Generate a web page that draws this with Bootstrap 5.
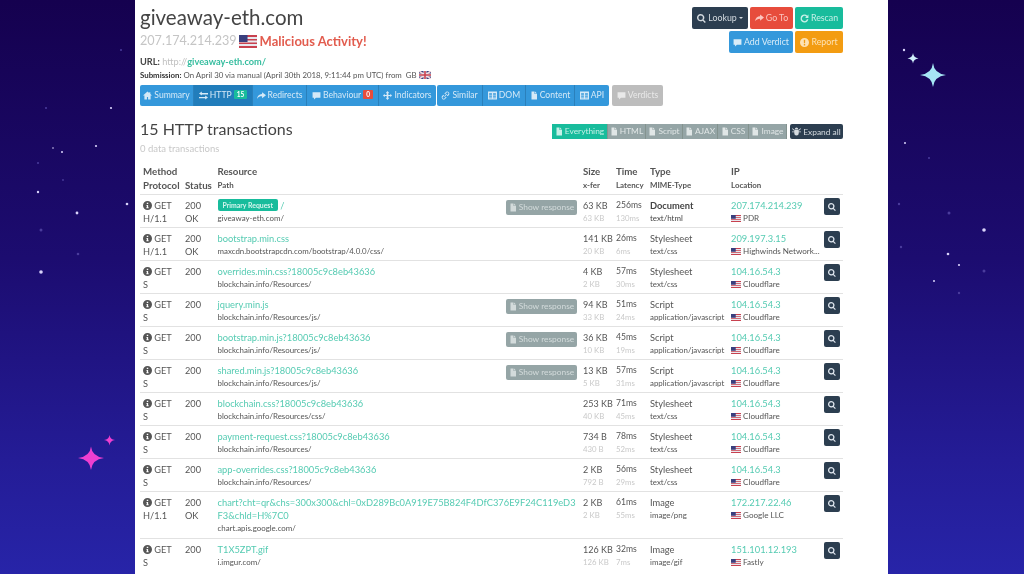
<!DOCTYPE html>
<html lang="en">
<head>
<meta charset="utf-8">
<title>giveaway-eth.com</title>
<link href="https://cdn.jsdelivr.net/npm/bootstrap@5.3.0/dist/css/bootstrap.min.css" rel="stylesheet">
<style>
html,body{height:574px;overflow:hidden}
body{background:linear-gradient(180deg,#15014f 0%,#1c0c70 45%,#241c96 80%,#2724a8 100%);font-family:"Lato",sans-serif;color:#555;position:relative}
.sky{position:absolute;left:0;top:0;width:1024px;height:574px}
.panel{position:relative;width:753px;height:574px;margin-left:135px;background:#fff;padding:0 45px 0 5px;overflow:hidden;filter:blur(.6px)}
.top-right{width:160px;gap:2px;padding-top:7px}
.act-row{gap:2px}
.site-name{font-size:20.5px;line-height:26px;font-weight:400;color:#444;margin:4px 0 0}
.ip-line{font-size:12.6px;line-height:18px;margin-top:2px;color:#c5c5c5;display:flex;align-items:center;gap:2px}
.alarm{color:#e25c4e;font-weight:700;font-size:13px;margin-left:1px}
.url-line{font-size:9.2px;line-height:13px;margin-top:5px;color:#c0c0c0}
.url-line b{color:#444}
.url-line a,.url-line strong{color:#35bd9f;font-weight:700;text-decoration:none}
.sub-line{font-size:7.85px;line-height:13px;margin-top:1px;color:#555}
.sub-line b{color:#333}
.act{font-size:8.8px;line-height:12px;padding:0;height:22px;border:0;border-radius:2px;color:#fff;display:inline-flex;align-items:center;justify-content:center;gap:2px}
.act:hover{color:#fff}
.w-look{width:56px}.w-go{width:43px}.w-re{width:48px}.w-add{width:64px}
.c-dark{background:#2c3e50;color:#d5dbe0}.c-red{background:#e74c3c;color:#fbc5bf}.c-green{background:#18bc9c;color:#c6f0e7}.c-blue{background:#3498db;color:#d9ecf8}.c-orange{background:#f39c12;color:#fde2b4}
.tabs{height:21px;margin-top:3px;gap:1px;display:flex}
.panel .tabs .btn-group>.tab+.tab,.panel .fbar .btn-group>.fbtn+.fbtn{margin-left:0}
.tab{font-size:8.6px;padding:0;height:21px;border:0;border-right:1px solid #2a80bb;background:#3498db;color:#d5e9f7;display:inline-flex;align-items:center;justify-content:center;gap:2px;border-radius:0}
.tab:hover{background:#3498db;color:#d5e9f7}
.tab.on{background:#217dbb}
.tab.on:hover{background:#217dbb}
.btn-group>.tab:first-child{border-radius:2px 0 0 2px}
.btn-group>.tab:last-child{border-radius:0 2px 2px 0;border-right:0}
.t54{width:54px}.t59{width:59px}.t72{width:72px}.t57{width:57px}.t46{width:46px}.t43{width:43px}.t49{width:49px}.t34{width:34px}
.tab-off{width:51px;margin-left:2px;background:#bdbdbd;border:0;border-radius:2px;color:#e9e9e9;font-size:8.6px;padding:0;display:inline-flex;align-items:center;justify-content:center;gap:2px}
.pill{font-size:6.5px;line-height:9px;padding:0 3px;border-radius:1px;font-weight:700;color:#fff}
.pill-g{background:#18bc9c}.pill-r{background:#e74c3c}
.head2{margin-top:12px;height:37px}
.sec-title{font-size:16px;line-height:22px;font-weight:400;color:#444;margin:0}
.sec-sub{font-size:9.5px;line-height:12px;margin-top:3px;color:#c8c8c8}
.fbar{gap:3px;margin-top:6px}
.fbtn{font-size:8.4px;height:15px;padding:0;border:0;border-right:1px solid #84938f;background:#95a5a6;color:#e0e6e6;border-radius:0;display:inline-flex;align-items:center;justify-content:center;gap:2px}
.fbtn:hover{background:#95a5a6;color:#e0e6e6}
.fbtn.on{background:#18bc9c;color:#c6f0e7}
.fbtn.on:hover{background:#18bc9c;color:#c6f0e7}
.f56{width:56px}.f38{width:38px}.f37{width:37px}.f35{width:35px}.f31{width:31px}
.expand{width:53px;height:15px;font-size:8.4px}
.tx{table-layout:fixed;width:703px;margin:9px 0 0;--bs-table-color:#555;--bs-table-bg:transparent;border-color:#e2e2e2}
.tx td,.tx th{padding:4px 0 2px 3px;line-height:13px;border-bottom:0;border-top:1px solid #e2e2e2;vertical-align:top;font-size:9.2px;color:#555;font-weight:400;white-space:nowrap}
.tx thead th{border-top:0;padding:0 0 2px 3px;color:#555;font-size:9.7px;font-weight:700;line-height:14px;vertical-align:bottom}
.tx td:nth-child(4){font-size:9px}
.tx td:nth-child(5){font-size:8.6px}
.tx td:nth-child(6){font-size:9.3px}
.tx td:nth-child(6).strong-t{font-size:9.3px;font-weight:700;color:#444}
.tx td:nth-child(7) .sm{font-size:8.1px}
.cm{width:42px}.cs{width:32.5px}.cr{width:365.5px}.cz{width:33px}.ct{width:34px}.cy{width:81px}.ci{width:93px}.cb{width:22px}
.lnk{color:#55cbb2;text-decoration:none;font-size:9.3px}
.tx td.wrapcell{white-space:normal;word-break:break-all;padding-bottom:3px;padding-right:3px}
.sm{font-size:7.9px;display:block}
.dim{color:#c9c9c9;font-size:7.8px;display:block}
.low{display:block}
.tag{display:inline-block;background:#18bc9c;color:#d6f5ee;font-size:6.9px;font-weight:700;line-height:12px;padding:0 5px;border-radius:2px;vertical-align:top}
.showr{float:right;width:71px;height:15px;margin:1px 3px 0 0;padding:0;background:#95a5a6;border:0;border-radius:2px;color:#d3dbdb;font-size:8.4px;display:inline-flex;align-items:center;justify-content:center;gap:2px}
.zoombtn{width:16px;height:17px;padding:0;background:#2c3e50;border:0;border-radius:2px;color:#dfe6ee;display:flex;align-items:center;justify-content:center;margin-top:-1px}
.zoombtn .i{width:8px;height:8px}
.i{width:9px;height:9px;fill:currentColor;flex:none}
.i-f{width:8px;height:9px;fill:currentColor;flex:none}
.ico-in{width:9px;height:9px;fill:#555;vertical-align:-1px}
.flag-b{width:18px;height:13px}
.flag-s{width:10px;height:7px;vertical-align:-.5px}
.flag-g{width:12px;height:8px;vertical-align:-1px}
.svg-defs{position:absolute;width:0;height:0}
</style>
</head>
<body>
<svg class="svg-defs" aria-hidden="true">
<defs>
<symbol id="file" viewBox="0 0 16 16"><path d="M3 0h6v5h5v11H3zM10 0l4 4h-4z"/></symbol>
<symbol id="home" viewBox="0 0 16 16"><path d="M8 1 0 8h2.500v7H7v-4.500h2V15h4.500V8H16l-3-2.600V2h-2v1.700z"/></symbol>
<symbol id="swap" viewBox="0 0 16 16"><path d="M0 10.500h11V8l5 3.500L11 15v-2H0zM16 3.500H5V1L0 4.500 5 8V6h11z"/></symbol>
<symbol id="share" viewBox="0 0 16 16"><path d="M9 2l7 5.500L9 13V9.500C5 9.500 2.500 10.500 0 14c.5-5 3.500-8 9-8.500z"/></symbol>
<symbol id="chat" viewBox="0 0 16 16"><path d="M1 2h14v10H7l-3.500 3v-3H1z"/></symbol>
<symbol id="cross" viewBox="0 0 16 16"><path d="M8 0l3 3.500H9.500V7H13V5l3 3-3 3V9H9.500v3.500H11L8 16l-3-3.500h1.500V9H3v2L0 8l3-3v2h3.500V3.500H5z"/></symbol>
<symbol id="link" viewBox="0 0 16 16"><path d="M10 1a4 4 0 0 1 4.500 5.500l-2.500 3-1.500-1.300 2.500-2.800a2 2 0 0 0-3-2.600L7.500 5.600 6 4.300zM6 15a4 4 0 0 1-4.500-5.500l2.500-3 1.500 1.300L3 10.600a2 2 0 0 0 3 2.600l2.500-2.800L10 11.700zM5.500 9.800l4.300-5 1 .9-4.300 5z"/></symbol>
<symbol id="grid" viewBox="0 0 16 16"><path d="M0 1h16v14H0zm2 3v2.500h5V4zm7 0v2.500h5V4zM2 8v2h5V8zm7 0v2h5V8zm-7 3.500V13h5v-1.500zm7 0V13h5v-1.500z" fill-rule="evenodd"/></symbol>
<symbol id="mag" viewBox="0 0 16 16"><path d="M6.500 0a6.500 6.500 0 0 1 5.200 10.400l4 4-1.700 1.600-4-4A6.500 6.500 0 1 1 6.500 0zm0 2.500a4 4 0 1 0 0 8 4 4 0 0 0 0-8z" fill-rule="evenodd"/></symbol>
<symbol id="plane" viewBox="0 0 16 16"><path d="M16 6 9 1v3C4 4 1 7 0 13c2-3 5-4.500 9-4.500V12z"/></symbol>
<symbol id="redo" viewBox="0 0 16 16"><path d="M8 1a7 7 0 0 1 5 2l2-2v6H9l2.300-2.300A4.500 4.500 0 1 0 12.400 9.500h2.500A7 7 0 1 1 8 1z"/></symbol>
<symbol id="info" viewBox="0 0 16 16"><path d="M8 0a8 8 0 1 1 0 16A8 8 0 0 1 8 0zM6.700 3v2.500h2.600V3zM6 7v1.500h.8V11H6v1.800h4V11h-.9V7z" fill-rule="evenodd"/></symbol>
<symbol id="bang" viewBox="0 0 16 16"><path d="M8 0a8 8 0 1 1 0 16A8 8 0 0 1 8 0zM6.700 3l.3 6.500h2L9.300 3zM6.800 10.800v2.400h2.400v-2.400z" fill-rule="evenodd"/></symbol>
<symbol id="bug" viewBox="0 0 16 16"><path d="M8 1a3 3 0 0 1 3 3H5a3 3 0 0 1 3-3zM4 5h8v6a4 4 0 0 1-8 0zM0 3l1-1 3 3-1 1zM16 3l-1-1-3 3 1 1zM0 8h4v1.500H0zM12 8h4v1.500h-4z"/></symbol>
<symbol id="us" viewBox="0 0 19 13" preserveAspectRatio="none"><rect width="19" height="13" fill="#e8e8ee"/><path d="M0 0h19v2H0zM0 4h19v1.500H0zM0 7.500h19V9H0zM0 11h19v2H0z" fill="#c8414f"/><rect width="9" height="7" fill="#3a3f7e"/></symbol>
<symbol id="gb" viewBox="0 0 12 8" preserveAspectRatio="none"><rect width="12" height="8" fill="#3a3f7e"/><path d="M0 0l12 8M12 0 0 8" stroke="#f2d8dc" stroke-width="1.600"/><path d="M6 0v8M0 4h12" stroke="#f2e8ea" stroke-width="3"/><path d="M6 0v8M0 4h12" stroke="#c8414f" stroke-width="1.600"/></symbol>
</defs>
</svg>

<svg class="sky" viewBox="0 0 1024 574" aria-hidden="true">
<g fill="#d9d3fa">
<circle cx="111" cy="108" r="1.100"/><circle cx="96" cy="146" r="1.100"/><circle cx="53" cy="148" r=".8"/><circle cx="62" cy="152" r="1"/><circle cx="38" cy="192" r="1.200"/><circle cx="77" cy="213" r="1.400"/><circle cx="127" cy="204" r="1.300"/><circle cx="41" cy="272" r="1.800"/>
<circle cx="904" cy="50" r="1.200"/><circle cx="905" cy="143" r="1"/><circle cx="984" cy="230" r="1.800"/><circle cx="948" cy="254" r="1.300"/><circle cx="959" cy="265" r="1.100"/><circle cx="934" cy="281" r="1"/>
</g>
<g fill="#4a3c9c">
<circle cx="46" cy="108" r="1"/><circle cx="38" cy="163" r="1"/><circle cx="41" cy="230" r="1.500"/><circle cx="78" cy="254" r="1.300"/><circle cx="63" cy="180" r=".9"/><circle cx="121" cy="50" r="1"/>
<circle cx="929" cy="158" r="1"/><circle cx="899" cy="204" r="1.200"/><circle cx="949" cy="213" r="1.500"/><circle cx="901" cy="247" r="1.200"/><circle cx="984" cy="271" r="1.500"/><circle cx="959" cy="293" r="1.200"/>
</g>
<path d="M91 446.500q1 10 13 11.500q-12 1.500-13 12q-1-10.500-13-12q12-1.500 13-11.500z" fill="#ee3fd0"/>
<path d="M109.500 435q.5 4.500 5.500 5q-5 .5-5.500 5.500q-.5-5-5.500-5.500q5-.5 5.500-5z" fill="#ee3fd0"/>
<path d="M933 63q1 10.500 13 12q-12 1.500-13 12q-1-10.500-13-12q12-1.500 13-12z" fill="#a6e6f5"/>
<path d="M913 53q.5 4.500 5.500 5.500q-5 .5-5.500 5q-.5-4.500-5.500-5q5-1 5.500-5.500z" fill="#cfeefa"/>
</svg>

<main class="panel">
<div class="d-flex justify-content-between">
  <div>
    <h1 class="site-name">giveaway-eth.com</h1>
    <div class="ip-line">207.174.214.239 <svg class="flag-b"><use href="#us"/></svg><span class="alarm">Malicious Activity!</span></div>
    <div class="url-line"><b>URL:</b> http://<strong>giveaway-eth.com/</strong></div>
    <div class="sub-line"><b>Submission:</b> On April 30 via manual (April 30th 2018, 9:11:44 pm UTC) from &nbsp;GB <svg class="flag-g"><use href="#gb"/></svg></div>
  </div>
  <div class="top-right d-flex flex-column align-items-end">
    <div class="d-flex act-row">
      <button class="btn act w-look c-dark"><svg class="i"><use href="#mag"/></svg>Lookup <span class="dropdown-toggle"></span></button>
      <button class="btn act w-go c-red"><svg class="i"><use href="#plane"/></svg>Go To</button>
      <button class="btn act w-re c-green"><svg class="i"><use href="#redo"/></svg>Rescan</button>
    </div>
    <div class="d-flex act-row">
      <button class="btn act w-add c-blue"><svg class="i"><use href="#chat"/></svg>Add Verdict</button>
      <button class="btn act w-re c-orange"><svg class="i"><use href="#bang"/></svg>Report</button>
    </div>
  </div>
</div>

<nav class="tabs">
  <div class="btn-group">
    <button class="btn tab t54"><svg class="i"><use href="#home"/></svg>Summary</button>
    <button class="btn tab t59 on"><svg class="i"><use href="#swap"/></svg>HTTP <span class="badge pill pill-g">15</span></button>
    <button class="btn tab t54"><svg class="i"><use href="#share"/></svg>Redirects</button>
    <button class="btn tab t72"><svg class="i"><use href="#chat"/></svg>Behaviour <span class="badge pill pill-r">0</span></button>
    <button class="btn tab t57"><svg class="i"><use href="#cross"/></svg>Indicators</button>
  </div>
  <div class="btn-group">
    <button class="btn tab t46"><svg class="i"><use href="#link"/></svg>Similar</button>
    <button class="btn tab t43"><svg class="i"><use href="#grid"/></svg>DOM</button>
    <button class="btn tab t49"><svg class="i-f"><use href="#file"/></svg>Content</button>
    <button class="btn tab t34"><svg class="i"><use href="#grid"/></svg>API</button>
  </div>
  <button class="btn tab-off"><svg class="i"><use href="#chat"/></svg>Verdicts</button>
</nav>

<div class="d-flex justify-content-between head2">
  <div>
    <h2 class="sec-title">15 HTTP transactions</h2>
    <div class="sec-sub">0 data transactions</div>
  </div>
  <div class="d-flex align-items-start fbar">
    <div class="btn-group">
      <button class="btn fbtn f56 on"><svg class="i-f"><use href="#file"/></svg>Everything</button>
      <button class="btn fbtn f38"><svg class="i-f"><use href="#file"/></svg>HTML</button>
      <button class="btn fbtn f37"><svg class="i-f"><use href="#file"/></svg>Script</button>
      <button class="btn fbtn f35"><svg class="i-f"><use href="#file"/></svg>AJAX</button>
      <button class="btn fbtn f31"><svg class="i-f"><use href="#file"/></svg>CSS</button>
      <button class="btn fbtn f38"><svg class="i-f"><use href="#file"/></svg>Image</button>
    </div>
    <button class="btn act expand c-dark"><svg class="i"><use href="#bug"/></svg>Expand all</button>
  </div>
</div>

<table class="table tx">
<colgroup><col class="cm"><col class="cs"><col class="cr"><col class="cz"><col class="ct"><col class="cy"><col class="ci"><col class="cb"></colgroup>
<thead>
<tr><th>Method<br>Protocol</th><th><br>Status</th><th>Resource<span class="sm">Path</span></th><th>Size<span class="sm">x-fer</span></th><th>Time<span class="sm">Latency</span></th><th>Type<span class="sm">MIME-Type</span></th><th>IP<span class="sm">Location</span></th><th></th></tr>
</thead>
<tbody>
<tr><td><svg class="ico-in"><use href="#info"/></svg> GET<span class="low">H/1.1</span></td><td>200<span class="low">OK</span></td><td><button class="btn showr"><svg class="i-f"><use href="#file"/></svg>Show response</button><span class="tag">Primary Request</span> <a class="lnk" href="#">/</a><span class="sm">giveaway-eth.com/</span></td><td>63 KB<span class="dim">63 KB</span></td><td>256ms<span class="dim">130ms</span></td><td class="strong-t">Document<span class="sm fw-normal">text/html</span></td><td><a class="lnk" href="#">207.174.214.239</a><span class="sm"><svg class="flag-s"><use href="#us"/></svg> PDR</span></td><td><button class="btn zoombtn"><svg class="i"><use href="#mag"/></svg></button></td></tr>
<tr><td><svg class="ico-in"><use href="#info"/></svg> GET<span class="low">H/1.1</span></td><td>200<span class="low">OK</span></td><td><a class="lnk" href="#">bootstrap.min.css</a><span class="sm">maxcdn.bootstrapcdn.com/bootstrap/4.0.0/css/</span></td><td>141 KB<span class="dim">20 KB</span></td><td>26ms<span class="dim">6ms</span></td><td>Stylesheet<span class="sm">text/css</span></td><td><a class="lnk" href="#">209.197.3.15</a><span class="sm"><svg class="flag-s"><use href="#us"/></svg> Highwinds Network...</span></td><td><button class="btn zoombtn"><svg class="i"><use href="#mag"/></svg></button></td></tr>
<tr><td><svg class="ico-in"><use href="#info"/></svg> GET<span class="low">S</span></td><td>200</td><td><a class="lnk" href="#">overrides.min.css?18005c9c8eb43636</a><span class="sm">blockchain.info/Resources/</span></td><td>4 KB<span class="dim">2 KB</span></td><td>57ms<span class="dim">30ms</span></td><td>Stylesheet<span class="sm">text/css</span></td><td><a class="lnk" href="#">104.16.54.3</a><span class="sm"><svg class="flag-s"><use href="#us"/></svg> Cloudflare</span></td><td><button class="btn zoombtn"><svg class="i"><use href="#mag"/></svg></button></td></tr>
<tr><td><svg class="ico-in"><use href="#info"/></svg> GET<span class="low">S</span></td><td>200</td><td><button class="btn showr"><svg class="i-f"><use href="#file"/></svg>Show response</button><a class="lnk" href="#">jquery.min.js</a><span class="sm">blockchain.info/Resources/js/</span></td><td>94 KB<span class="dim">33 KB</span></td><td>51ms<span class="dim">24ms</span></td><td>Script<span class="sm">application/javascript</span></td><td><a class="lnk" href="#">104.16.54.3</a><span class="sm"><svg class="flag-s"><use href="#us"/></svg> Cloudflare</span></td><td><button class="btn zoombtn"><svg class="i"><use href="#mag"/></svg></button></td></tr>
<tr><td><svg class="ico-in"><use href="#info"/></svg> GET<span class="low">S</span></td><td>200</td><td><button class="btn showr"><svg class="i-f"><use href="#file"/></svg>Show response</button><a class="lnk" href="#">bootstrap.min.js?18005c9c8eb43636</a><span class="sm">blockchain.info/Resources/js/</span></td><td>36 KB<span class="dim">10 KB</span></td><td>45ms<span class="dim">19ms</span></td><td>Script<span class="sm">application/javascript</span></td><td><a class="lnk" href="#">104.16.54.3</a><span class="sm"><svg class="flag-s"><use href="#us"/></svg> Cloudflare</span></td><td><button class="btn zoombtn"><svg class="i"><use href="#mag"/></svg></button></td></tr>
<tr><td><svg class="ico-in"><use href="#info"/></svg> GET<span class="low">S</span></td><td>200</td><td><button class="btn showr"><svg class="i-f"><use href="#file"/></svg>Show response</button><a class="lnk" href="#">shared.min.js?18005c9c8eb43636</a><span class="sm">blockchain.info/Resources/js/</span></td><td>13 KB<span class="dim">5 KB</span></td><td>57ms<span class="dim">31ms</span></td><td>Script<span class="sm">application/javascript</span></td><td><a class="lnk" href="#">104.16.54.3</a><span class="sm"><svg class="flag-s"><use href="#us"/></svg> Cloudflare</span></td><td><button class="btn zoombtn"><svg class="i"><use href="#mag"/></svg></button></td></tr>
<tr><td><svg class="ico-in"><use href="#info"/></svg> GET<span class="low">S</span></td><td>200</td><td><a class="lnk" href="#">blockchain.css?18005c9c8eb43636</a><span class="sm">blockchain.info/Resources/css/</span></td><td>253 KB<span class="dim">40 KB</span></td><td>71ms<span class="dim">45ms</span></td><td>Stylesheet<span class="sm">text/css</span></td><td><a class="lnk" href="#">104.16.54.3</a><span class="sm"><svg class="flag-s"><use href="#us"/></svg> Cloudflare</span></td><td><button class="btn zoombtn"><svg class="i"><use href="#mag"/></svg></button></td></tr>
<tr><td><svg class="ico-in"><use href="#info"/></svg> GET<span class="low">S</span></td><td>200</td><td><a class="lnk" href="#">payment-request.css?18005c9c8eb43636</a><span class="sm">blockchain.info/Resources/</span></td><td>734 B<span class="dim">430 B</span></td><td>78ms<span class="dim">52ms</span></td><td>Stylesheet<span class="sm">text/css</span></td><td><a class="lnk" href="#">104.16.54.3</a><span class="sm"><svg class="flag-s"><use href="#us"/></svg> Cloudflare</span></td><td><button class="btn zoombtn"><svg class="i"><use href="#mag"/></svg></button></td></tr>
<tr><td><svg class="ico-in"><use href="#info"/></svg> GET<span class="low">S</span></td><td>200</td><td><a class="lnk" href="#">app-overrides.css?18005c9c8eb43636</a><span class="sm">blockchain.info/Resources/</span></td><td>2 KB<span class="dim">792 B</span></td><td>56ms<span class="dim">29ms</span></td><td>Stylesheet<span class="sm">text/css</span></td><td><a class="lnk" href="#">104.16.54.3</a><span class="sm"><svg class="flag-s"><use href="#us"/></svg> Cloudflare</span></td><td><button class="btn zoombtn"><svg class="i"><use href="#mag"/></svg></button></td></tr>
<tr><td><svg class="ico-in"><use href="#info"/></svg> GET<span class="low">H/1.1</span></td><td>200<span class="low">OK</span></td><td class="wrapcell"><a class="lnk" href="#">chart?cht=qr&amp;chs=300x300&amp;chl=0xD289Bc0A919E75B824F4DfC376E9F24C119eD3F3&amp;chld=H%7C0</a><span class="sm">chart.apis.google.com/</span></td><td>2 KB<span class="dim">2 KB</span></td><td>61ms<span class="dim">55ms</span></td><td>Image<span class="sm">image/png</span></td><td><a class="lnk" href="#">172.217.22.46</a><span class="sm"><svg class="flag-s"><use href="#us"/></svg> Google LLC</span></td><td><button class="btn zoombtn"><svg class="i"><use href="#mag"/></svg></button></td></tr>
<tr><td><svg class="ico-in"><use href="#info"/></svg> GET<span class="low">S</span></td><td>200</td><td><a class="lnk" href="#">T1X5ZPT.gif</a><span class="sm">i.imgur.com/</span></td><td>126 KB<span class="dim">126 KB</span></td><td>32ms<span class="dim">7ms</span></td><td>Image<span class="sm">image/gif</span></td><td><a class="lnk" href="#">151.101.12.193</a><span class="sm"><svg class="flag-s"><use href="#us"/></svg> Fastly</span></td><td><button class="btn zoombtn"><svg class="i"><use href="#mag"/></svg></button></td></tr>
</tbody>
</table>
</main>
</body>
</html>
